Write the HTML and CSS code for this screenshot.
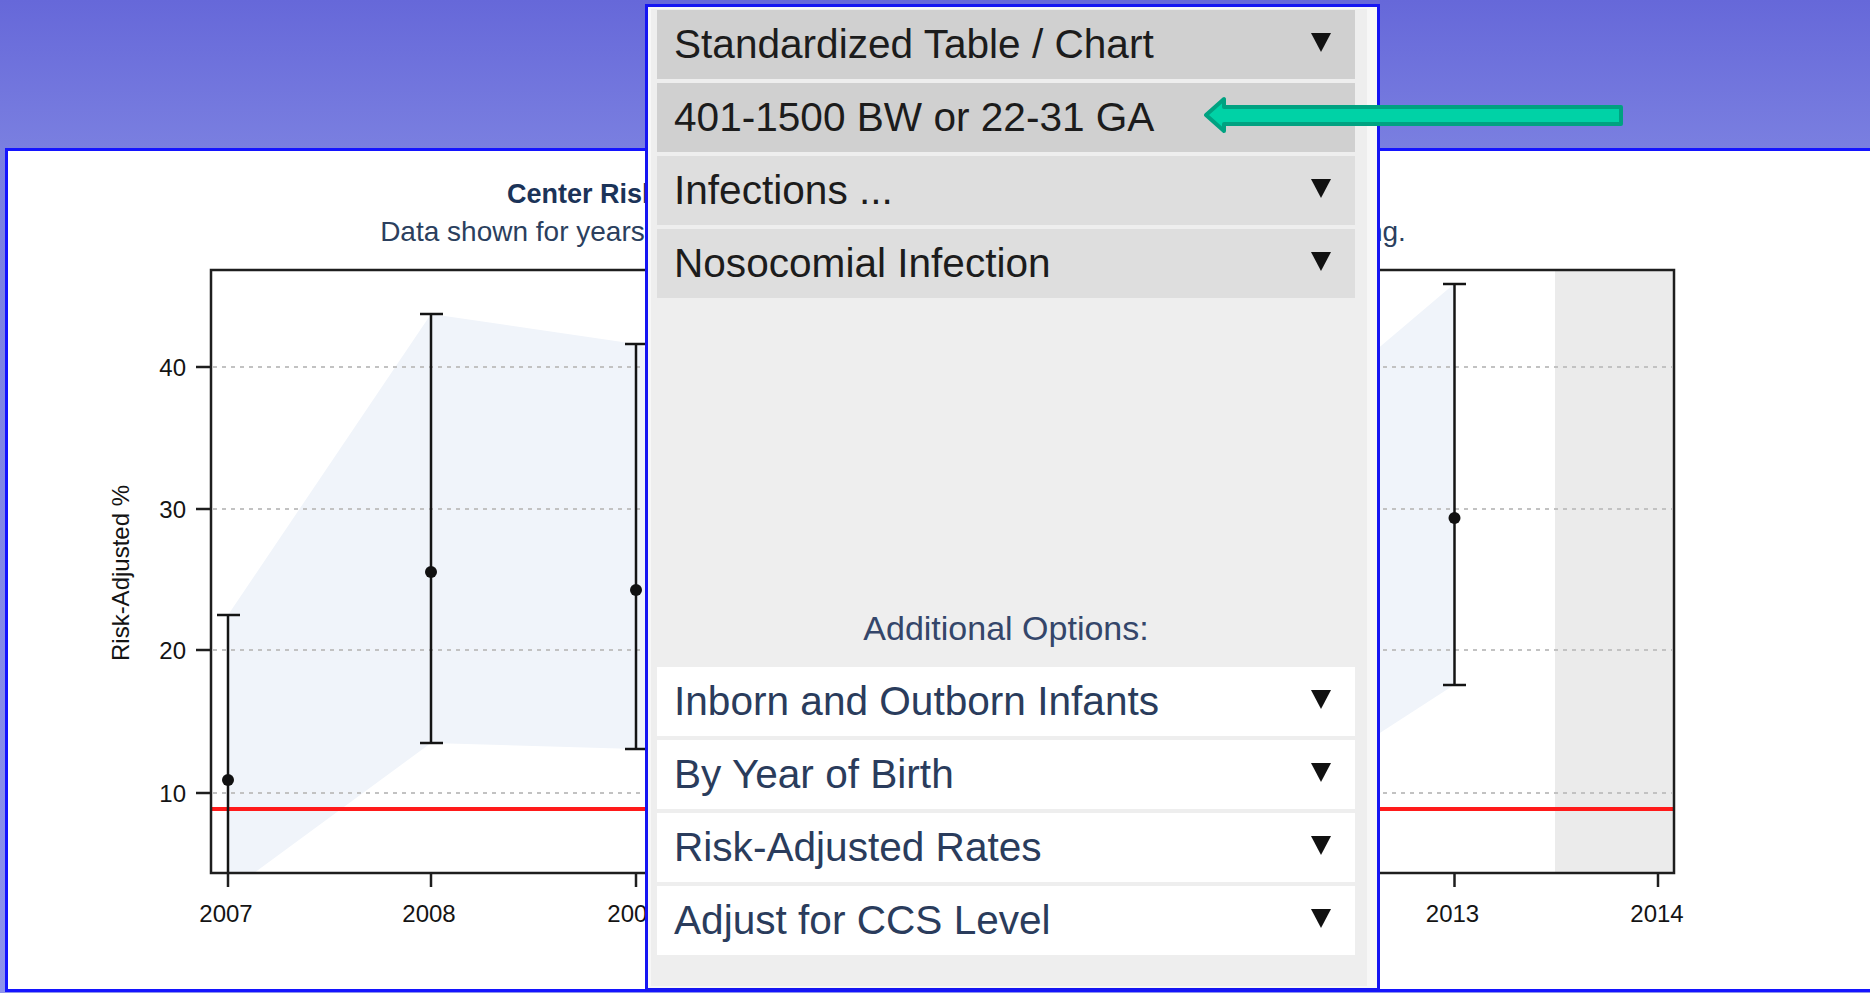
FILE: index.html
```html
<!DOCTYPE html>
<html lang="en">
<head>
<meta charset="utf-8">
<title>Center Risk-Adjusted Rates</title>
<link rel="stylesheet" href="styles.css">
</head>
<body>
<div class="page">
  <section class="card">
    <header class="chart-head">
      <h1 class="chart-title">Center Risk-Adjusted Rates of Nosocomial Infection by Year</h1>
      <p class="chart-sub">Data shown for years 2007-2013. Gray shaded area indicates data still processing.</p>
    </header>
    <svg class="plot" width="1862" height="738" viewBox="8 251 1862 738" xmlns="http://www.w3.org/2000/svg">
      <defs>
        <clipPath id="plot-clip"><rect x="211" y="270" width="1463" height="603"/></clipPath>
      </defs>
      <g clip-path="url(#plot-clip)">
        <!-- year still processing -->
        <rect x="1555" y="270" width="119" height="603" fill="#ebebeb"/>
        <!-- confidence band -->
        <polygon fill="#f0f4fa" points="228,615 431,314 636,344 841,424 1045,452 1250,457 1454,284 1454,685 1250,817 1045,800 841,779 636,749 431,743 228,892"/>
        <!-- grid -->
        <g stroke="#c2c2c2" stroke-width="2" stroke-dasharray="4 5">
          <line x1="213" y1="367" x2="1672" y2="367"/>
          <line x1="213" y1="509" x2="1672" y2="509"/>
          <line x1="213" y1="650" x2="1672" y2="650"/>
          <line x1="213" y1="793" x2="1672" y2="793"/>
        </g>
        <!-- network benchmark -->
        <line x1="211" y1="809" x2="1674" y2="809" stroke="#ff1a1a" stroke-width="4"/>
        <!-- error bars -->
        <g stroke="#141414" stroke-width="2.5">
          <line x1="228" y1="615" x2="228" y2="880"/>
          <line x1="217" y1="615" x2="240" y2="615"/>
          <line x1="431" y1="314" x2="431" y2="743"/>
          <line x1="420" y1="314" x2="443" y2="314"/>
          <line x1="420" y1="743" x2="443" y2="743"/>
          <line x1="636" y1="344" x2="636" y2="749"/>
          <line x1="625" y1="344" x2="647" y2="344"/>
          <line x1="625" y1="749" x2="647" y2="749"/>
          <line x1="841" y1="424" x2="841" y2="779"/>
          <line x1="830" y1="424" x2="852" y2="424"/>
          <line x1="830" y1="779" x2="852" y2="779"/>
          <line x1="1045" y1="452" x2="1045" y2="800"/>
          <line x1="1034" y1="452" x2="1056" y2="452"/>
          <line x1="1034" y1="800" x2="1056" y2="800"/>
          <line x1="1250" y1="457" x2="1250" y2="817"/>
          <line x1="1239" y1="457" x2="1261" y2="457"/>
          <line x1="1239" y1="817" x2="1261" y2="817"/>
          <line x1="1454.5" y1="284" x2="1454.5" y2="685"/>
          <line x1="1443" y1="284" x2="1466" y2="284"/>
          <line x1="1443" y1="685" x2="1466" y2="685"/>
        </g>
        <g fill="#111">
          <circle cx="228" cy="780" r="6"/>
          <circle cx="431" cy="572" r="6"/>
          <circle cx="636" cy="590" r="6"/>
          <circle cx="841" cy="637" r="6"/>
          <circle cx="1045" cy="665" r="6"/>
          <circle cx="1250" cy="679" r="6"/>
          <circle cx="1454.5" cy="518" r="6"/>
        </g>
      </g>
      <!-- frame and axes -->
      <rect x="211" y="270" width="1463" height="603" fill="none" stroke="#1e1e1e" stroke-width="2.5"/>
      <g stroke="#1e1e1e" stroke-width="2.5">
        <line x1="196" y1="367" x2="211" y2="367"/>
        <line x1="196" y1="509" x2="211" y2="509"/>
        <line x1="196" y1="650" x2="211" y2="650"/>
        <line x1="196" y1="793" x2="211" y2="793"/>
        <line x1="228" y1="873" x2="228" y2="887"/>
        <line x1="431" y1="873" x2="431" y2="887"/>
        <line x1="636" y1="873" x2="636" y2="887"/>
        <line x1="841" y1="873" x2="841" y2="887"/>
        <line x1="1045" y1="873" x2="1045" y2="887"/>
        <line x1="1250" y1="873" x2="1250" y2="887"/>
        <line x1="1454.5" y1="873" x2="1454.5" y2="887"/>
        <line x1="1658" y1="873" x2="1658" y2="887"/>
      </g>
      <g class="tick-label" text-anchor="end">
        <text x="186" y="375.5">40</text>
        <text x="186" y="517.5">30</text>
        <text x="186" y="658.5">20</text>
        <text x="186" y="801.5">10</text>
      </g>
      <g class="tick-label" text-anchor="middle">
        <text x="226" y="921.5">2007</text>
        <text x="429" y="921.5">2008</text>
        <text x="634" y="921.5">2009</text>
        <text x="839" y="921.5">2010</text>
        <text x="1043" y="921.5">2011</text>
        <text x="1248" y="921.5">2012</text>
        <text x="1452.5" y="921.5">2013</text>
        <text x="1657" y="921.5">2014</text>
      </g>
      <text class="tick-label" text-anchor="middle" transform="translate(129 573) rotate(-90)">Risk-Adjusted %</text>
    </svg>
  </section>

  <aside class="menu">
    <div class="menu-inner">
      <div class="row row-dark"><span class="row-text">Standardized Table / Chart</span><span class="caret"></span></div>
      <div class="row row-dark"><span class="row-text">401-1500 BW or 22-31 GA</span><span class="caret"></span></div>
      <div class="row row-mid"><span class="row-text">Infections ...</span><span class="caret"></span></div>
      <div class="row row-mid"><span class="row-text">Nosocomial Infection</span><span class="caret"></span></div>

      <div class="extra">
        <div class="extra-label">Additional Options:</div>
        <div class="row row-light"><span class="row-text">Inborn and Outborn Infants</span><span class="caret"></span></div>
        <div class="row row-light"><span class="row-text">By Year of Birth</span><span class="caret"></span></div>
        <div class="row row-light"><span class="row-text">Risk-Adjusted Rates</span><span class="caret"></span></div>
        <div class="row row-light"><span class="row-text">Adjust for CCS Level</span><span class="caret"></span></div>
      </div>
    </div>
  </aside>

  <svg class="pointer" width="435" height="50" viewBox="0 0 435 50" xmlns="http://www.w3.org/2000/svg">
    <polygon points="11,25 29,9 29,17 426,17 426,34 29,34 29,41" fill="#00d2a6" stroke="#00a281" stroke-width="4" stroke-linejoin="round"/>
  </svg>
</div>
</body>
</html>
```

FILE: styles.css
```css
* {
  box-sizing: border-box;
}

html,
body {
  margin: 0;
  padding: 0;
}

body {
  font-family: "Liberation Sans", Arial, sans-serif;
  width: 1870px;
  height: 993px;
  overflow: hidden;
}

.page {
  position: relative;
  width: 1870px;
  height: 993px;
  padding: 148px 0 0 5px;
  overflow: hidden;
  background: linear-gradient(180deg, #6668d9 0px, #7a7fe0 148px, #8e93ec 993px);
}

/* white chart card */
.card {
  width: 1865px;
  height: 844px;
  background: #ffffff;
  border: 3px solid #1414ff;
  border-right: 0;
}

.chart-head {
  width: 1770px;
  height: 100px;
  padding-top: 27px;
  text-align: center;
}

.chart-title {
  margin: 0;
  font-size: 27px;
  line-height: 32px;
  font-weight: bold;
  color: #1b3358;
}

.chart-sub {
  margin: 5px 0 0;
  font-size: 28px;
  line-height: 34px;
  color: #2b3f5e;
}

.plot {
  display: block;
}

.tick-label {
  font-family: "Liberation Sans", Arial, sans-serif;
  font-size: 24px;
  fill: #141414;
}

/* dropdown menu panel */
.menu {
  position: absolute;
  left: 645px;
  top: 4px;
  width: 735px;
  height: 987px;
  border: 3px solid #1515f2;
  background: #f7f7f7;
  padding: 2px 10px 2px 3px;
}

.menu-inner {
  height: 100%;
  background: #eeeeee;
  padding: 1px 12px 31px 6px;
  display: flex;
  flex-direction: column;
  gap: 4px;
}

.row {
  height: 69px;
  flex: none;
  display: flex;
  align-items: center;
  justify-content: space-between;
  padding: 0 24px 0 17px;
  font-size: 40.6px;
}

.row-dark {
  background: #d0d0d0;
  color: #1c1c1c;
}

.row-mid {
  background: #dedede;
  color: #1c1c1c;
}

.row-light {
  background: #ffffff;
  color: #2a3c5c;
}

.row-text {
  white-space: nowrap;
}

.caret {
  width: 0;
  height: 0;
  border-left: 10px solid transparent;
  border-right: 10px solid transparent;
  border-top: 19px solid #111111;
  margin-bottom: 4px;
}

.extra {
  margin-top: auto;
  display: flex;
  flex-direction: column;
  gap: 4px;
}

.extra-label {
  height: 40px;
  line-height: 40px;
  margin-bottom: 15px;
  text-align: center;
  font-size: 34px;
  color: #34466a;
}

/* pointer arrow */
.pointer {
  position: absolute;
  left: 1195px;
  top: 90px;
}
```
